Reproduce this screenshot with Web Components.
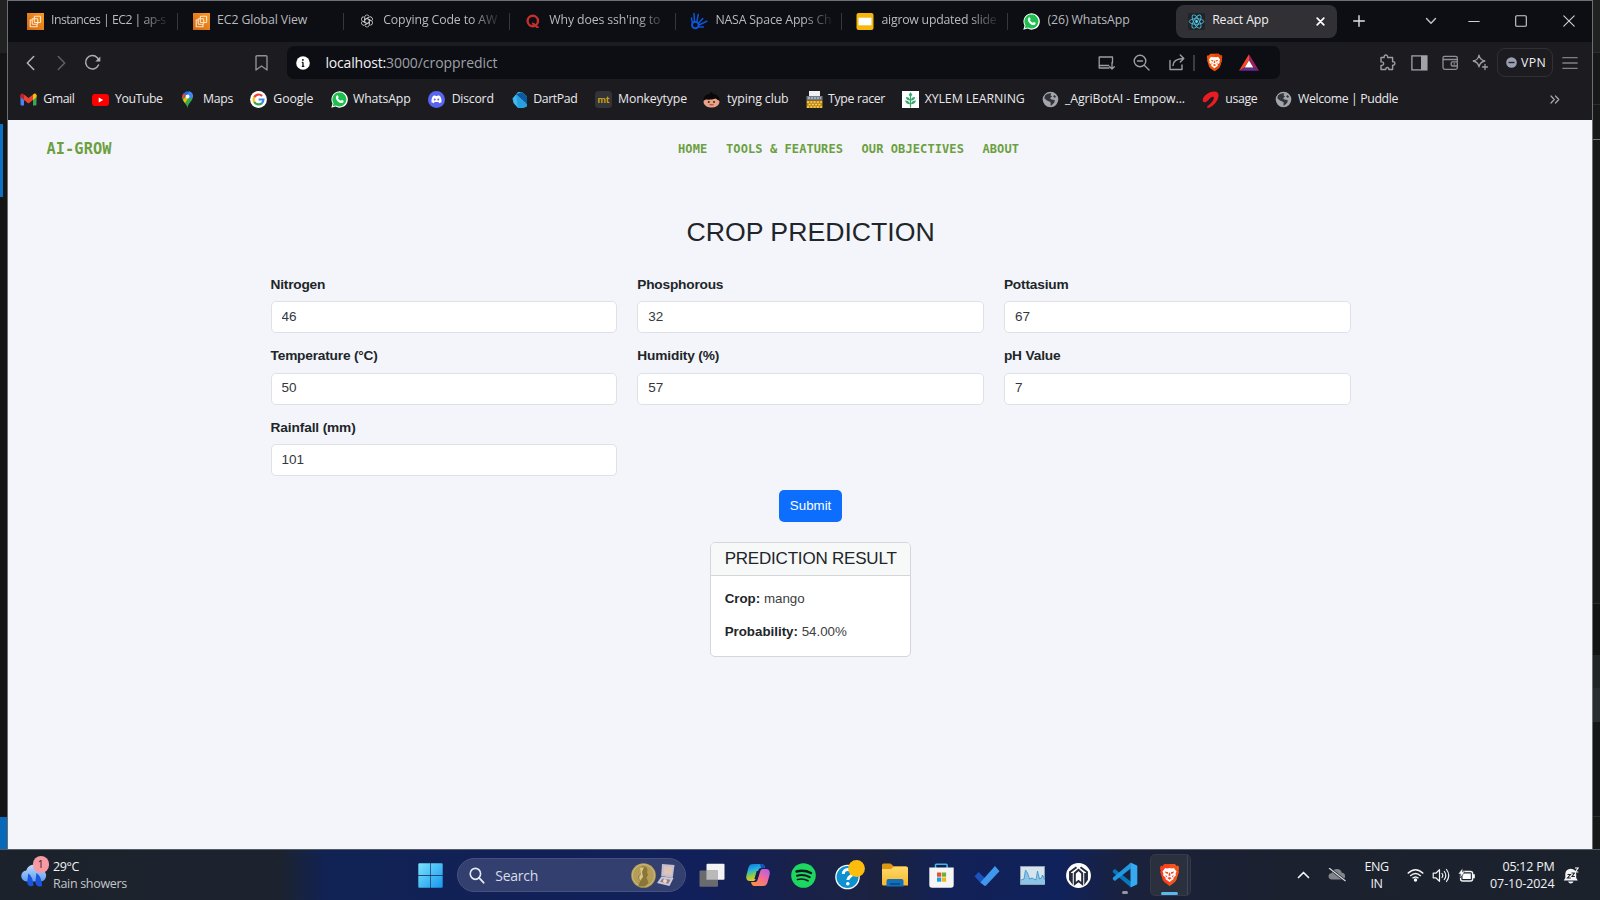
<!DOCTYPE html>
<html lang="en">
<head>
<meta charset="utf-8">
<title>React App</title>
<style>
html,body{margin:0;height:900px;overflow:hidden;background:#161717}
body{font-family:"Open Sans","Noto Sans",sans-serif}
</style>
</head>
<body>
<desktop-screen></desktop-screen>
<script>
const define = (name, render, setup) => customElements.define(name, class extends HTMLElement {
  connectedCallback() {
    if (this.shadowRoot) return;
    const root = this.attachShadow({ mode: 'open' });
    root.innerHTML = render(this);
    if (setup) setup(this, root);
  }
});

/* text whose tracking is adjusted so that it fills the width in "w" */
define('fit-text', () => `<style>:host{display:block;flex:none;white-space:nowrap;width:max-content}</style><slot></slot>`, el => {
  const w = parseFloat(el.getAttribute('w'));
  if (!w) return;
  const natural = el.getBoundingClientRect().width;
  const n = el.textContent.length;
  el.style.letterSpacing = ((w - natural) / n).toFixed(3) + 'px';
});

const shield = (a, b) => `<path fill="${a}" d="M6 1h12l2 2.5 2-.3 1 3-1 2 .6 1.800-3 9.500-1.600 2L12 26l-6-4.500-1.600-2-3-9.500L2 8.200 1 6.200l1-3 2 .3z"/><path fill="${b}" d="M12 1h6l2 2.500 2-.3 1 3-1 2 .6 1.800-3 9.500-1.600 2L12 26z"/><path fill="#fff" d="M7 5.500l2.500.6L12 5.600l2.500.5 2.500-.6 3 4-1 2 .2 2.600-3 2.400.5 1.500L12 21.500 7.300 18l.5-1.500-3-2.400.2-2.600-1-2z"/><path fill="${a}" d="M6.500 9.500l4 .8-.6 2.200-2-1zM17.500 9.500l-4 .8.6 2.200 2-1zM9.500 17l2.500-1.300 2.500 1.300-2.500 1.800zM11.300 11h1.400l.5 3-1.200.7-1.200-.7zM7 13.300l2.400 1.700-1 1zM17 13.300L14.600 15l1 1z"/>`;
const ec2 = `<defs><linearGradient id="e" x1="0" y1="1" x2="1" y2="0"><stop stop-color="#d06612"/><stop offset="1" stop-color="#fb9a25"/></linearGradient></defs><rect width="17" height="17" fill="url(#e)"/><g fill="none" stroke="#ffe6c8" stroke-width="1.100" stroke-linejoin="round"><rect x="7.300" y="3.200" width="6.300" height="6.300" rx=".8"/><path d="M5.300 7H3.200v6.700H10v-2.200"/><rect x="5.200" y="5.800" width="5.500" height="5.500" rx=".8"/></g>`;
const wa = `<path fill="#fff" d="M.3 16.800l1.200-4.300A8.200 8.200 0 1 1 4.600 15.600z"/><path fill="#1fbf4f" d="M1.800 15.300l.8-3A7 7 0 1 1 5 14.500z"/><path fill="#fff" d="M6 4.300c.5-.2.900 0 1 .4l.6 1.400c0 .4-.7.900-.6 1.200.6 1.200 1.500 2 2.700 2.500.4 0 .8-1 1.200-.9l1.600.8c.3.3 0 1.300-.4 1.700-1.500 1.300-3.700.3-5.200-1C5.300 8.800 3.800 6.500 6 4.300z"/>`;
const globe = `<circle cx="8.500" cy="8.500" r="7.800" fill="#a2a6ac"/><path fill="#33353a" d="M3 4.500C5 2.500 8 2 9.300 2.500L8.500 4.200 10 5.600 8 7.200l1.500 1.200 3.200.6-.3 2.600-3.600 3.500c-.6-1.500.4-3-.5-4L5 9.500 2.300 7.200zM12.500 4l1.800 2-2 .8-1.200-1.500z"/>`;
const line = (d, c = '#a9abb0', w = 1.3, extra = '') => `<path fill="none" stroke="${c}" stroke-width="${w}" stroke-linejoin="round" stroke-linecap="round" d="${d}"/>${extra}`;

const ICONS = {
  ec2: [17, 17, ec2],
  gpt: [14, 14, `<circle cx="7" cy="7" r="6.500" fill="#08090b"/><g fill="none" stroke="#c2c3c6" stroke-width=".9">${[0,60,120,180,240,300].map(a => `<path transform="rotate(${a} 7 7)" d="M4.600 8.300V3.400a2.400 2.400 0 0 1 4.400-1.300M4.600 5.900L8.900 3.400"/>`).join('')}</g>`],
  quora: [14, 15, `<circle cx="6.800" cy="7" r="5.200" fill="none" stroke="#c3302c" stroke-width="2.400"/><path d="M6 9.500c2.500-.3 3.500 2 4.500 3.300.6.600 1.500.4 2-.3" fill="none" stroke="#c3302c" stroke-width="1.900"/>`],
  nasa: [18, 18, `<g fill="none" stroke="#0b55d9" stroke-linecap="round"><circle cx="5.300" cy="13" r="3.300" stroke-width="1.900"/><path stroke-width="1.500" d="M2.500 11.500L1.500 6M4.500 10L4 1.500M6.800 10L8.300 2.500M8.300 11.500l4.500-5M9 13l7.800-3.700M8.500 15l5 0"/></g>`],
  slides: [18, 17, `<rect x=".5" width="17" height="17" rx="2" fill="#f4b70a"/><rect x="2.500" y="4.700" width="13" height="7.600" fill="#fff"/>`],
  wa: [17, 17, wa],
  react: [17, 17, `<rect width="17" height="17" rx="2" fill="#202329"/><g fill="none" stroke="#4fc0da" stroke-width=".9"><ellipse cx="8.500" cy="8.500" rx="7.300" ry="2.800"/><ellipse cx="8.500" cy="8.500" rx="7.300" ry="2.800" transform="rotate(60 8.500 8.500)"/><ellipse cx="8.500" cy="8.500" rx="7.300" ry="2.800" transform="rotate(120 8.500 8.500)"/></g><circle cx="8.500" cy="8.500" r="1.400" fill="#61dafb"/>`],
  x: [9, 9, line('M1.200 1.200l6.600 6.600M7.800 1.200L1.200 7.800', '#fff', 1.7)],
  plus: [12, 12, line('M6 .7v10.600M.7 6h10.600', '#e2e2e4', 1.4)],
  down: [12, 8, line('M1.500 1.500L6 6.300l4.500-4.800', '#c4c5c8', 1.4)],
  min: [12, 12, line('M.8 6.500h10.400', '#d0d1d3', 1.1)],
  max: [12, 12, '<rect x=".7" y=".7" width="10.600" height="10.600" rx="1" fill="none" stroke="#d0d1d3" stroke-width="1.100"/>'],
  close: [12, 12, line('M.8.8l10.400 10.400M11.200.8L.8 11.200', '#d0d1d3', 1.1)],
  back: [9, 16, line('M7.700 1.500L1.300 8l6.400 6.500', '#b4b5b9', 1.5)],
  fwd: [9, 16, line('M1.300 1.500L7.700 8l-6.400 6.500', '#606167', 1.5)],
  reload: [17, 17, line('M14.500 11a6.700 6.700 0 1 1-1.200-7.300L15 6', '#aeb0b4', 1.5, '<path fill="#aeb0b4" d="M16.300 2.500v5h-5z"/>')],
  mark: [13, 16, line('M1 1.800q0-1 1-1h9q1 0 1 1V15l-5.500-4L1 15z', '#8e9095', 1.4)],
  info: [14, 14, `<circle cx="7" cy="7" r="6.800" fill="#fff"/><path d="M7 6.200v4.200M5.800 6.300H7M5.800 10.400h2.500" stroke="#111218" stroke-width="1.300"/><circle cx="6.900" cy="3.900" r=".95" fill="#111218"/>`],
  install: [18, 15, line('M12 13H2.200V2h13.300v6M2.200 10.500h9.500M15 7.500V14M12.700 11.800l2.300 2.300 2.300-2.300', '#9c9da3', 1.3)],
  zoomout: [17, 17, line('M11.500 11.500L16 16M4.500 7h5', '#9c9da3', 1.4, '<circle cx="7" cy="7" r="5.800" fill="none" stroke="#9c9da3" stroke-width="1.400"/>')],
  share: [17, 17, line('M2 6.500V15.500h12V11M5 11.500c0-4 3-6.700 10.500-7M12.300 1l3.500 3.500L12.300 8', '#9c9da3', 1.4)],
  bar: [2, 18, '<path d="M1 1v16" stroke="#5c5d63" stroke-width="1.200"/>'],
  brave: [24, 27, shield('#f4560c', '#e24808')],
  brave2: [24, 27, shield('#fb3f1c', '#f2541b')],
  bat: [20, 17, `<path fill="#ff4724" d="M10 .3L0 16.700l5.500-3.200L10 6z"/><path fill="#9e1f63" d="M10 .3l10 16.400-5.500-3.200L10 6z"/><path fill="#662d91" d="M0 16.700h20l-5.500-3.200h-9z"/><path fill="#fff" d="M10 6.300L5.700 13.400h8.600z"/>`],
  puzzle: [17, 17, line('M2 3.500h3.200c-.8-3.300 4-3.300 3.400 0h5v4.300c3-.8 3 4 0 3.300V15.500H9.800c.5-2.700-3.500-2.700-3 0H2v-4c3.500.5 3.500-4.300 0-3.600z', '#9c9da3', 1.4)],
  side: [17, 16, '<rect x=".9" y=".9" width="15" height="14" fill="none" stroke="#a2a3a9" stroke-width="1.300"/><path fill="#a2a3a9" d="M10 1h6v14h-6z"/>'],
  wallet: [17, 16, line('M15.300 4.500V3q0-1.700-1.700-1.700H2.600Q1 1.300 1 3v9.500q0 1.800 1.800 1.800h11q1.500 0 1.500-1.500V4.500H1.500M15.300 6.800h-4.800q-1.300 0-1.300 1.300v1.600q0 1.300 1.300 1.300h4.800M12 8.900h.6', '#8e9095', 1.3)],
  spark: [17, 17, line('M7 1.200c.8 3.700 2 5 5.800 5.800C9 7.800 7.800 9.200 7 12.800 6.200 9.200 5 7.800 1.200 7 5 6.200 6.200 5 7 1.200zM13 10.500v5M10.500 13h5', '#9c9da3', 1.3)],
  vpn: [11, 11, '<circle cx="5.500" cy="5.500" r="5.300" fill="#9a9fb5"/><path d="M2.500 5.500h6" stroke="#22232a" stroke-width="1.400"/>'],
  menu: [16, 14, line('M.8 1.700h14.400M.8 7h14.400M.8 12.300h14.400', '#7f8086', 1.3)],
  more: [10, 9, line('M1 1l3.300 3.500L1 8M5.500 1l3.300 3.500L5.500 8', '#a9abb0', 1.2)],
  gmail: [17, 13, '<path fill="#4285f4" d="M.5 2v9.500q0 1 1 1H4V5z"/><path fill="#34a853" d="M16.500 2v9.500q0 1-1 1H13V5z"/><path fill="#fbbc04" d="M13 1.500l1.500-1q2-.3 2 1.700v2L13 7z"/><path fill="#c5221f" d="M4 1.500L2.500.5Q.5.200.5 2.200v2L4 7z"/><path fill="#ea4335" d="M4 1.400l4.500 3.500L13 1.400V7l-4.500 3.400L4 7z"/>'],
  yt: [17, 12, '<rect width="17" height="12" rx="3" fill="#f00"/><path fill="#fff" d="M6.700 3.500v5l4.500-2.500z"/>'],
  maps: [17, 17, '<path fill="#34a853" d="M8.500 17C8 13 3 10.500 3 6l11-1c0 5-5 7-5.500 12z"/><path fill="#1a73e8" d="M4 3l3-2.600 3.500 0L6 5.500z"/><path fill="#ea4335" d="M3.300 7.500A5.500 5.500 0 0 1 4.200 2.500L7 4.700z"/><path fill="#fbbc04" d="M4 9l6.500-7 2 0-6.500 10z"/><path fill="#4285f4" d="M10 .3c3 .8 4.500 3 4 5.700L11 7.800 8 4z"/><circle cx="8.500" cy="5.600" r="2" fill="#f4f6fb"/>'],
  google: [17, 17, '<circle cx="8.500" cy="8.500" r="8.400" fill="#fff"/><g fill="none" stroke-width="2.200"><path stroke="#ea4335" d="M4.300 6.200a4.900 4.900 0 0 1 7.800-1.300"/><path stroke="#fbbc05" d="M4.500 11.200a5 5 0 0 1-.1-5.200"/><path stroke="#34a853" d="M12 12.100a4.900 4.900 0 0 1-7.700-1.200"/><path stroke="#4285f4" d="M8.600 8.500h4.800a5 5 0 0 1-1.600 3.700"/></g>'],
  discord: [17, 17, '<circle cx="8.500" cy="8.500" r="8.500" fill="#5865f2"/><path fill="#fff" d="M5 5l2-.7.600.8h1.800l.6-.8 2 .7c1.300 2 1.700 4 1.500 6.200l-2.300 1-.8-1.300H6.600l-.8 1.300-2.300-1C3.300 9 3.700 7 5 5z"/><circle cx="6.700" cy="8.600" r="1" fill="#5865f2"/><circle cx="10.300" cy="8.600" r="1" fill="#5865f2"/>'],
  dart: [17, 17, '<path fill="#40b8ee" d="M1.500 7.500L7 1h4l5 4.500-1 7-5 4.500H7L2.500 12z"/><path fill="#0a5a9c" d="M5 3.300L11 1l5 4.500v7.800z"/><path fill="#2a9fe0" d="M5 3.300l11 10v2.200L12.500 17H7z"/>'],
  mt: [17, 17, '<rect width="17" height="17" rx="3.500" fill="#323437"/><text x="8.500" y="12" text-anchor="middle" font-family="Lato" font-weight="700" font-size="10" fill="#d5a914">mt</text>'],
  tc: [17, 17, '<ellipse cx="8.500" cy="11" rx="8" ry="5.500" fill="#eaa287"/><path fill="#0b0908" d="M.5 9.800C.3 5 4 3 7 2.700 6.500.300 10 .300 9.800 2.700c4 .3 7 2.800 6.700 7.100-2-.6-2.500-1.700-4-2.300C9.500 8.800 5 8.800 2.700 8.500z"/><circle cx="5.800" cy="11" r=".9" fill="#221610"/><circle cx="11" cy="11" r=".9" fill="#221610"/><path stroke="#8e4032" d="M6.500 13.800h4"/>'],
  racer: [17, 17, '<path fill="#f1f1f3" d="M3 0h11v6H3z"/><path fill="#777c88" d="M.5 5h16v4.500H.5z"/><path stroke="#ddd" stroke-dasharray="2 1" d="M2 7h13"/><path fill="#bd8717" d="M.5 9.500h16V17H.5z"/><path stroke="#ffd65a" stroke-width="1.700" stroke-dasharray="2 1.300" d="M1 11h15M2.500 13.500h13M1 16h15"/>'],
  xylem: [17, 17, '<path fill="#fff" d="M0 0h17v17H0z"/><g fill="#35a86b"><path d="M8.500 1.200l1.800 2.500-1.800 2.500-1.800-2.500zM7.900 5h1.200v11.500H7.900zM8 9.500C5 9.500 4.200 8 4 6c2.500 0 3.800 1 4 3.500zM9 9.500c3 0 3.800-1.500 4-3.500-2.500 0-3.800 1-4 3.500zM8 13.300c-3 0-4.500-1.800-5-3.800 3 0 4.800 1.300 5 3.800zM9 13.300c3 0 4.500-1.800 5-3.800-3 0-4.800 1.300-5 3.800z"/></g>'],
  globe: [17, 17, globe],
  airtel: [17, 17, '<path fill="#e91c24" d="M.7 9.500C.5 5.500 6.500.5 12 .5c3.500 0 4.800 1.800 4.500 4.500-.5 5-4.500 9.500-9.300 11.700-2 .6-2.700-.6-1.700-1.700 2.500-1.700 5.500-4.300 6.300-7.500.4-1.800-.8-2.300-2.600-1.300C7.500 7.200 6.500 9.500 4 11c-1.800.8-3.200.2-3.300-1.500z"/>'],
  weather: [27, 23, '<defs><linearGradient id="c" x2="0" y2="1"><stop stop-color="#c0dafa"/><stop offset="1" stop-color="#5d9df2"/></linearGradient></defs><path fill="url(#c)" d="M6 17.500a5.500 5.500 0 0 1-.5-11C7.500-.5 18-1.500 20 6c4.500.5 6.700 3 6 6.500-.5 3-2.500 4.800-5.500 5z"/><path fill="#1b55dd" d="M7.500 9.500c3 2 5 5.500 5.500 12-3 2-7 0-6.500-4zM16 9c3.500 2.500 5.500 6 6 13-4 1.300-7.500-.5-7-4.500z"/>'],
  win: [25, 25, '<defs><linearGradient id="w" x2="1" y2="1"><stop stop-color="#7ae4fb"/><stop offset="1" stop-color="#1696ee"/></linearGradient></defs><path fill="url(#w)" d="M1 .3h11.200v11.900H.3V1zM12.800.3H24l.7.700v11.200H12.800zM.3 12.900h11.900v11.800H1l-.7-.7zM12.800 12.900h11.900V24l-.7.700H12.800z"/>'],
  search: [17, 17, line('M10.800 10.800L15.500 15.700', '#e8eaf2', 1.9, '<circle cx="6.800" cy="6.800" r="5.500" fill="none" stroke="#e8eaf2" stroke-width="1.700"/>')],
  medal: [45, 25, '<circle cx="12.500" cy="12.500" r="12.300" fill="#b39d58"/><circle cx="12.500" cy="12.500" r="11" fill="none" stroke="#d7c683" stroke-width=".7"/><path fill="#8a7637" d="M10.500 3.500c5-1.300 7 3 5.500 5.500l1 3-1.500 2.500 2 5.500-3.500 3.500H7l2-5-2-4.500 3-3.500z"/><path fill="#d8c688" d="M9 5l4-1-2 5 1 5-3 4-1-4 2-3z"/><path fill="#c5bdd0" d="M31 1l12.500 1-1.800 13-11.500-2z"/><path fill="#dec3b7" d="M33 3.500l8.500.8-1 8-8-1.300z"/><path fill="#cdc9dd" d="M30.500 13.500l12 1.500-4 8-12.500-3z"/><path fill="#927f83" d="M31.500 15.500l8 1.300-2.500 4-8-2z"/><circle cx="34" cy="18" r="2" fill="#eed9c3"/>'],
  task: [26, 25, '<rect x="7.500" y=".7" width="18" height="16" rx="1" fill="#f3f3f3"/><rect x=".5" y="7.500" width="18.500" height="16.300" rx="1" fill="#707070" opacity=".94"/><path fill="#b9b9b9" d="M7.500 7.500H19v9.200H7.500z"/>'],
  copilot: [24, 24, '<defs><linearGradient id="p" x2=".3" y2="1"><stop stop-color="#0b73dc"/><stop offset=".4" stop-color="#25b2de"/><stop offset=".7" stop-color="#87cb47"/><stop offset="1" stop-color="#f6c422"/></linearGradient><linearGradient id="q" x1="1" x2=".3" y2="1"><stop stop-color="#a85ef5"/><stop offset=".5" stop-color="#f06a9c"/><stop offset="1" stop-color="#fd8d45"/></linearGradient></defs><path fill="url(#p)" d="M7 1h9c2 .3 2.500 1.700 3 4h-3.500c-2 0-2.800.8-3.300 2.500L10 15c-.8 2.500-1.500 3-3.500 3H4C.5 18-.3 15.500.5 12l2-7.500C3.300 2 4.500 1 7 1z"/><path fill="url(#q)" d="M17 23H8.500c-2 0-3-1.300-3.500-4h3.300c2 0 2.900-1 3.400-2.600L14 9c.8-2.500 1.500-3 3.500-3H20c3.500 0 4.300 2.500 3.500 6l-2 7.500C20.700 22 19.500 23 17 23z"/><path fill="#1552bd" d="M14 1h2c2 .3 2.500 1.700 3 4h-4z"/><path fill="#131d50" d="M10.700 8h3l-2.300 8h-3z"/>'],
  spotify: [25, 25, '<circle cx="12.500" cy="12.500" r="12.300" fill="#1ed760"/><g fill="none" stroke="#0b1a20" stroke-linecap="round"><path stroke-width="2.500" d="M5.500 8.500c5-1.500 10-.8 14.500 1.500"/><path stroke-width="2.100" d="M6 12.700c4.500-1.300 8.700-.700 12.700 1.400"/><path stroke-width="1.700" d="M6.500 16.500c4-1 7.500-.5 10.500 1.300"/></g>'],
  help: [30, 30, '<circle cx="12.500" cy="17" r="12.300" fill="#fff"/><circle cx="12.500" cy="17" r="11" fill="#0d91d1"/><path fill="none" stroke="#fff" stroke-width="3" d="M8.300 14c0-6 9-5.700 9-.6 0 3.300-4.500 3-4.500 6.600"/><circle cx="12.800" cy="23.800" r="1.800" fill="#fff"/><circle cx="21.500" cy="8.500" r="8.400" fill="#fcbd0e"/>'],
  folder: [26, 24, '<defs><linearGradient id="f" x2="0" y2="1"><stop stop-color="#ffd968"/><stop offset="1" stop-color="#f5b82d"/></linearGradient></defs><path fill="#dc9716" d="M0 2q0-1.500 1.500-1.500h7L12 3.500h12V9H0z"/><path fill="url(#f)" d="M0 6h9l3-2.500h12.500q1.500 0 1.500 1.500v17.500H1.500Q0 22.500 0 21z"/><path fill="#1270ba" d="M4.500 23.500V18q0-2 2-2h13q2 0 2 2v5.500z"/><path fill="#0b508e" d="M8 20h10v2H8z"/>'],
  store: [25, 25, '<path fill="none" stroke="#44b6e5" stroke-width="1.600" d="M6.500 5V2q0-.8.800-.8h10q.8 0 .8.800v3"/><path fill="#f5f5f5" d="M.3 4.500h24.400V22q0 2.700-2.700 2.700H3Q.3 24.700.3 22z"/><path fill="#e85028" d="M8 9.500h4.200v4.200H8z"/><path fill="#6fb12d" d="M12.900 9.500h4.200v4.200h-4.200z"/><path fill="#1d9be3" d="M8 14.500h4.200v4.200H8z"/><path fill="#f7b514" d="M12.900 14.500h4.200v4.200h-4.200z"/>'],
  todo: [26, 21, '<path fill="#1c52bd" d="M.5 11.300L4.700 7l6 6-4.500 4.500z"/><path fill="#3f98ee" d="M6.200 17.500l4.300 3.200q.8.500 1.500-.3L25.500 6.300 21 1 10.500 12.700z"/>'],
  mon: [25, 19, '<path fill="#d5e4ed" stroke="#96a6b0" stroke-width=".8" d="M.4.400h24.200v18.200H.4z"/><path fill="#8cc4e6" d="M1 14l3-1 1-7.500 2.500 1 1.500 6 3-1 1 1 3.500 1 1-8 1 3 1 4 2-1 1-3 2.500 5v4.500H1z"/><path fill="none" stroke="#3a8fc4" stroke-width=".8" d="M1 14l3-1 1.500-9 2 3 2 6 3-1 1 1 2.500 1 1.500-9 1 4 1 4 2-1 1-3 2.500 5"/>'],
  dome: [25, 25, '<circle cx="12.500" cy="12.500" r="12.400" fill="#fff"/><g fill="none" stroke="#252b3c"><path stroke-width="2" d="M8.800 21V10.300l3.700-3.500 3.700 3.500V21l-3.700-3z"/><path stroke-width="1.900" d="M10.500 4.300L4 9v7.500l1.800 2.500V10M14.500 4.300L21 9v7.500L19.200 19V10"/></g>'],
  code: [26, 26, '<path fill="#0878be" d="M.8 8.800l2-1.800 16 12.500V25l-1-.5L.8 10.200z"/><path fill="#2198e2" d="M.8 17.200l2 1.800 16-12.500V1l-1 .5L.8 15.800z"/><path fill="#35aaf3" d="M18.500.5l6 2.800q.8.400.8 1.200v17q0 .8-.8 1.200l-6 2.800z"/>'],
  up: [13, 8, line('M1.500 6.500l5-5 5 5', '#f2f3f5', 1.7)],
  cloud: [18, 14, '<path fill="#82868c" d="M4 11.500q-3.500-.3-3.500-3.300Q.700 5.500 3.500 5.300 5 1 9 1q4 .2 4.800 3.700 3.300.3 3.300 3.500 0 3-3.200 3.300z"/><path stroke="#1c222c" stroke-width="2.600" d="M1 0l16.500 13"/><path stroke="#dadce0" stroke-width="1.200" d="M1 0l16.500 13"/>'],
  wifi: [17, 14, '<g fill="none" stroke="#f2f3f5" stroke-width="1.400"><path d="M.7 5.500q7.800-7.500 15.600 0"/><path d="M3.200 8q5.300-5 10.600 0"/><path d="M5.500 10.300q3-2.700 6 0"/></g><circle cx="8.500" cy="12" r="1.700" fill="#fff"/>'],
  vol: [18, 15, line('M1.200 5.200h2.600l3.700-3.500v11.600L3.800 9.800H1.200zM10 5.500q1.600 2 0 4M12.300 3.500q3 4 0 8M14.500 1.500q4.500 6 0 12', '#f2f3f5', 1.2)],
  batt: [17, 15, '<rect x="2.600" y="3.500" width="12" height="9.500" rx="2" fill="none" stroke="#f2f3f5" stroke-width="1.400"/><path fill="#fff" d="M4.500 5.600h8.300V11H4.500zM15 6.300h1.800v4H15z"/><path fill="#fff" stroke="#1c222c" stroke-width=".6" d="M4.800 0L0 6h2.800L2 10l5-6H4.500z"/>'],
  bell: [16, 17, '<path fill="#f4f4f6" d="M.7 13.500L2.300 11V7q.3-5 5.400-5.200Q13 2 13.200 7v4l1.600 2.500zM5 14.500h5.500q-.6 2-2.700 2T5 14.500z"/><path fill="none" stroke="#1c222c" stroke-width="1.100" d="M4.500 7.500h3l-3 3.500h3.300M8.500 6h3L9 9.500h2.800"/><path fill="none" stroke="#fff" stroke-width="1.100" d="M12 1h3.200L12.300 5h3"/>']
};

/* <ui-icon name="…" w h>: one drawing from the set, optionally scaled */
define('ui-icon', el => {
  const [w, h, body] = ICONS[el.getAttribute('name')];
  const W = el.getAttribute('w') || w, H = el.getAttribute('h') || h;
  return `<style>:host{display:block;flex:none;width:${W}px;height:${H}px}svg{display:block}</style>
  <svg width="${W}" height="${H}" viewBox="0 0 ${w} ${h}" preserveAspectRatio="none">${body}</svg>`;
});

/* a slot of fixed width in a bar; its content is centred on both axes */
define('bar-cell', el => `<style>:host{display:flex;flex:none;align-items:center;justify-content:center;width:${el.getAttribute('w')}px}</style><slot></slot>`);
const cell = (w, icon, size = '') => `<bar-cell w="${w}">${icon ? `<ui-icon name="${icon}" ${size}></ui-icon>` : ''}</bar-cell>`;

define('browser-tab', el => `<style>
:host{display:flex;flex:none;box-sizing:border-box;width:166.1px;height:33px;align-items:center;padding-left:14px;color:#b9babd;font-size:12.300px;line-height:18px;border-right:0}
.ico{width:18px;display:flex;justify-content:center;flex:none;margin-right:7px}
.label{width:116px;overflow:hidden;flex:none;padding-bottom:1.500px}
:host([fade]) .label{-webkit-mask-image:linear-gradient(90deg,#000 76%,rgba(0,0,0,.12));mask-image:linear-gradient(90deg,#000 76%,rgba(0,0,0,.12))}
.sep{width:1px;height:17px;background:#36373c;margin-left:9.500px}
:host([active]){width:161px;background:#313035;border-radius:8px;color:#f0f0f1;padding-left:11.500px}
:host([active]) .label{width:104px}
:host([active]) .sep,:host([last]) .sep{display:none}
</style><span class="ico"><ui-icon name="${el.getAttribute('icon')}"></ui-icon></span>
<span class="label"><fit-text w="${el.getAttribute('tw')}">${el.getAttribute('label')}</fit-text></span>
${el.hasAttribute('active') ? '<ui-icon name="x"></ui-icon>' : '<span class="sep"></span>'}`);

const TABS = [
  ['ec2', 'Instances | EC2 | ap-s', 114.5, 'fade'],
  ['ec2', 'EC2 Global View', 90, ''],
  ['gpt', 'Copying Code to AW', 114, 'fade'],
  ['quora', "Why does ssh'ing to", 111, 'fade'],
  ['nasa', 'NASA Space Apps Ch', 116, 'fade'],
  ['slides', 'aigrow updated slide', 115, 'fade'],
  ['wa', '(26) WhatsApp', 82, 'last']
];
define('tab-strip', () => `<style>
:host{display:flex;height:41px;align-items:flex-start;padding:3.500px 0 0 4px;box-sizing:border-box;background:#0d0e13}
browser-tab[active]{margin-left:1px}
.end{display:flex;height:33px}
</style>${TABS.map(([i, l, w, f]) => `<browser-tab icon="${i}" label="${l}" tw="${w}" ${f}></browser-tab>`).join('')}<browser-tab active icon="react" label="React App" tw="56.500"></browser-tab>
<div class="end">${cell(44, 'plus')}${cell(101, 'down')}</div><div class="end" style="margin-left:-34.500px">${cell(53, 'min')}${cell(42, 'max')}${cell(54, 'close')}</div>`);

define('address-bar', () => `<style>
:host{display:flex;flex:none;align-items:center;width:993px;height:33px;border-radius:7px;background:#0d0e13;font-size:14px;line-height:20px;color:#9fa1a6;box-sizing:border-box;padding-left:9.500px}
.host{color:#f2f2f3;margin-left:15.500px}.fill{flex:1}
</style><ui-icon name="info"></ui-icon><fit-text class="host" w="60.500">localhost:</fit-text><fit-text w="111.500">3000/croppredict</fit-text><span class="fill"></span>
${cell(33, 'install')}${cell(38, 'zoomout')}${cell(32, 'share')}${cell(2, 'bar')}${cell(40, 'brave', 'w="17" h="19"')}${cell(29, 'bat')}<bar-cell w="16"></bar-cell>`);

define('tool-bar', () => `<style>
:host{display:flex;height:41px;align-items:center;background:#1c1b20;box-sizing:border-box;padding:0 0 0 7px}
.vpn{display:flex;align-items:center;gap:4px;box-sizing:border-box;width:56px;height:29px;border:1px solid #303035;border-radius:8px;padding-left:8px;color:#f0f0f1;font-size:12.300px;margin-left:1px}
</style>${cell(31, 'back')}${cell(31, 'fwd')}${cell(31, 'reload')}${cell(138)}${cell(31, 'mark')}${cell(8.5)}<bar-cell w="1"></bar-cell><address-bar></address-bar>
<bar-cell w="92.500"></bar-cell>${cell(31.5, 'puzzle')}${cell(31, 'side')}${cell(31, 'wallet')}${cell(30.5, 'spark')}<div class="vpn"><ui-icon name="vpn"></ui-icon><fit-text w="25">VPN</fit-text></div>${cell(34, 'menu')}`);

const MARKS = [
  ['gmail', 'Gmail', 20, 43.3, 31], ['yt', 'YouTube', 91.5, 115, 47.5], ['maps', 'Maps', 179, 203, 30],
  ['google', 'Google', 250, 273.3, 40], ['wa', 'WhatsApp', 331, 353, 57.5], ['discord', 'Discord', 428, 451.7, 42],
  ['dart', 'DartPad', 511, 533.3, 44], ['mt', 'Monkeytype', 595, 618, 69], ['tc', 'typing club', 703, 727, 61.5],
  ['racer', 'Type racer', 805.5, 828, 57], ['xylem', 'XYLEM LEARNING', 902, 924.7, 100],
  ['globe', '_AgriBotAI - Empow...', 1041.5, 1065, 120], ['airtel', 'usage', 1202.3, 1225.3, 32], ['globe', 'Welcome | Puddle', 1275, 1298, 100]
];
define('bookmark-item', el => `<style>:host{display:flex;flex:none;align-items:center}.i{display:flex;flex:none;width:17px;justify-content:center}</style><span class="i"><ui-icon name="${el.getAttribute('icon')}"></ui-icon></span><slot></slot>`);
define('bookmark-bar', () => `<style>
:host{display:flex;height:37px;box-sizing:border-box;align-items:center;background:#1c1b20;padding:0 0 4px 12px;color:#e9e9eb;font-size:12.300px;line-height:18px}
fit-text{padding-bottom:1px}
</style>${MARKS.map(([i, l, x, t, w], k) => `<bookmark-item icon="${i}" style="width:${(k < 13 ? MARKS[k + 1][2] : 1550.5) - x}px"><fit-text w="${w}" style="margin-left:${t - x - 17}px">${l}</fit-text></bookmark-item>`).join('')}<ui-icon name="more"></ui-icon>`);

define('site-nav', () => `<style>
:host{display:flex;align-items:center;height:56px;padding:1px 0 0 38.500px;box-sizing:border-box;color:#6c9f40;font-family:"DejaVu Sans Mono","Liberation Mono",monospace;font-weight:700;font-size:12px;line-height:20px}
.brand{font-size:15.300px;width:631.500px}
nav{display:flex;gap:18.500px}
</style><div class="brand"><fit-text w="65">AI-GROW</fit-text></div><nav><fit-text w="29.500">HOME</fit-text><fit-text w="117">TOOLS &amp; FEATURES</fit-text><fit-text w="102.500">OUR OBJECTIVES</fit-text><fit-text w="36.500">ABOUT</fit-text></nav>`);

define('form-field', el => `<style>
:host{display:block}
label{display:block;font-weight:700;font-size:13.700px;line-height:20px;margin-bottom:6.670px;width:max-content}
input{display:block;width:100%;box-sizing:border-box;height:31.670px;border:1px solid #dee2e6;border-radius:5px;background:#fff;color:#33383d;font:inherit;font-size:13.500px;line-height:20px;padding:4px 10px 6px;margin:0;outline:0}
</style><label><fit-text w="${el.getAttribute('lw')}">${el.getAttribute('label')}</fit-text></label><input value="${el.getAttribute('value')}">`);

define('result-card', () => `<style>
:host{display:block;box-sizing:border-box;width:200.500px;border:1px solid #d4d6d9;border-radius:5px;background:#fff;overflow:hidden}
h5{margin:0;font-weight:400;font-size:17px;line-height:20px;padding:6.200px 13.300px 6.800px;background:#f7f8f8;border-bottom:1px solid #d4d6d9}
.body{padding:12.700px 13.300px 13.300px}p{margin:0 0 13.300px;line-height:20px;color:#3c4045}p:last-child{margin:0}b{color:#212529}
</style><h5><fit-text w="172">PREDICTION RESULT</fit-text></h5><div class="body"><p><b>Crop:</b> mango</p><p><b>Probability:</b> 54.00%</p></div>`);

define('crop-page', () => `<style>
:host{display:block;flex:1;background:#f3f5fa;color:#212529;font-family:"Liberation Sans",Arial,sans-serif;font-size:13.330px}
main{width:1080px;margin:0 0 0 262.600px;display:flex;flex-direction:column;align-items:center}
h2{margin:40px 0 26.600px;font-weight:400;font-size:26.670px;line-height:32px}
form{display:grid;grid-template-columns:repeat(3,1fr);column-gap:20px;row-gap:13.300px;width:100%}
button{font:inherit;line-height:20px;margin:13.700px 0 19.700px;width:62.700px;height:32px;padding:0;border:0;border-radius:5px;background:#0d6efd;color:#fff}
</style><site-nav></site-nav><main><h2>CROP PREDICTION</h2><form>
<form-field label="Nitrogen" lw="54.500" value="46"></form-field><form-field label="Phosphorous" lw="86" value="32"></form-field><form-field label="Pottasium" lw="64.500" value="67"></form-field>
<form-field label="Temperature (°C)" lw="107" value="50"></form-field><form-field label="Humidity (%)" lw="82" value="57"></form-field><form-field label="pH Value" lw="56.500" value="7"></form-field>
<form-field label="Rainfall (mm)" lw="85" value="101"></form-field></form><button type="button">Submit</button><result-card></result-card></main>`);

define('browser-window', () => `<style>
:host{display:flex;flex-direction:column;box-sizing:border-box;width:1586px;height:849px;border:1px solid #6c7070;border-bottom:0;background:#f3f5fa}
</style><tab-strip></tab-strip><tool-bar></tool-bar><bookmark-bar></bookmark-bar><crop-page></crop-page>`);

/* slivers of the window that lies behind the browser */
define('edge-left', () => `<style>:host{display:flex;flex-direction:column;width:7px;height:849px;background:#151515}i{display:block}</style><i style="height:53px;background:#222"></i><i style="height:71px"></i><i style="height:73px;width:3px;background:#0b6fc4"></i><i style="height:620px"></i><i style="height:32px;background:#0969b9"></i>`);
define('edge-right', () => `<style>:host{display:flex;flex-direction:column;width:7px;height:849px;background:#171919}i{display:block;flex:none}</style><i style="height:52px;background:#202222"></i><i style="height:1px;background:#2c2e2e"></i><i style="height:51px"></i><i style="height:1px;background:#2c2e2e"></i><i style="height:34px"></i><i style="height:1px;background:#777"></i><i style="height:463px"></i><i style="height:1px;background:#292b2c"></i><i style="height:51px;background:#121414"></i><i style="height:33px;background:#222526"></i><i style="height:34px;background:#2a2d2f"></i><i style="height:94px;background:#141617"></i><i style="height:1px;background:#2c2e2e"></i>`);

define('weather-widget', () => `<style>
:host{display:flex;align-items:flex-start;width:398px;padding-left:21px;box-sizing:border-box;color:#f1f2f4;font-size:12.500px;line-height:17px}
.pic{position:relative;width:32px;height:42px}
.pic ui-icon{margin-top:14px}
.badge{position:absolute;left:11.500px;top:6px;width:16.500px;height:16.500px;border-radius:50%;background:#f79aa4;color:#42202a;font-size:11px;line-height:16.500px;text-align:center}
.t{margin-top:8px}.g{color:#c3c6ca}
</style><div class="pic"><ui-icon name="weather" w="26"></ui-icon><span class="badge">1</span></div><div class="t"><fit-text w="26">29°C</fit-text><fit-text class="g" w="74">Rain showers</fit-text></div>`);

define('task-search', () => `<style>
:host{display:flex;flex:none;align-items:center;box-sizing:border-box;width:229px;height:34px;border:1px solid #44507e;border-radius:17px;background:#33406f;color:#d9dce8;font-size:14px;line-height:20px;padding:0 9px 0 11.500px}
fit-text{margin-left:10px;padding-top:1px}.fill{flex:1}
</style><ui-icon name="search" w="16"></ui-icon><fit-text w="43">Search</fit-text><span class="fill"></span><ui-icon name="medal"></ui-icon>`);

define('app-button', el => `<style>
:host{display:flex;flex:none;position:relative;width:45.900px;height:42px;align-items:center;justify-content:center}
:host([active]){width:41.500px;box-sizing:border-box;background:linear-gradient(90deg,#2b303f 36px,#414756 36px,#414756 37px,#262c39 37px);border:1px solid #343a48;border-radius:5px;margin-left:2px;padding-right:1px}
.run{position:absolute;bottom:2px;left:50%;width:6.500px;height:3px;margin-left:-3px;border-radius:2px;background:#9496a0}
:host([active]) .run{width:17px;margin-left:-9px;bottom:0;background:#5bb8ee}
</style><ui-icon name="${el.getAttribute('icon')}" ${el.hasAttribute('active') ? 'w="21" h="24"' : ''}></ui-icon>${el.hasAttribute('run') ? '<span class="run"></span>' : ''}`);

define('system-tray', () => `<style>
:host{display:flex;align-items:center;height:42px;color:#f1f2f4;font-size:12.500px;line-height:17px}
.c{display:flex;flex-direction:column;align-items:center;width:28px}
.r{display:flex;flex-direction:column;align-items:flex-end;width:79.500px;margin-right:8.500px}
</style>${cell(15, 'up')}<bar-cell w="16"></bar-cell>${cell(20, 'cloud')}<bar-cell w="15.500"></bar-cell><div class="c"><fit-text w="24">ENG</fit-text><fit-text w="12">IN</fit-text></div><bar-cell w="15.500"></bar-cell>${cell(19, 'wifi')}${cell(32, 'vol')}${cell(18, 'batt')}<div class="r"><fit-text w="52">05:12 PM</fit-text><fit-text w="64.500">07-10-2024</fit-text></div><ui-icon name="bell"></ui-icon>`);

const APPS = ['task', 'copilot', 'spotify', 'help', 'folder', 'store', 'todo', 'mon', 'dome'];
define('task-bar', () => `<style>
:host{display:flex;box-sizing:border-box;height:51px;border-top:1px solid #555c63;background:linear-gradient(90deg,#1c222b 0,#1c232f 280px,#112254 325px,#11205a 700px,#19214a 800px,#1b2240 880px,#122157 950px,#10225b 1060px,#1a213b 1130px,#1b212e 1290px,#1c222c 1600px)}
.mid{display:flex;align-items:center;height:42px;margin-top:4px}
task-search{margin-right:3px}.gap{flex:1}
.logo{padding-left:7px}
app-button[icon=help]{padding-left:1px;width:44.900px}
system-tray{margin:4px 21px 0 0}
</style><weather-widget></weather-widget><div class="mid"><div class="logo">${cell(51.7, 'win')}</div><task-search></task-search>${APPS.map(a => `<app-button icon="${a}"></app-button>`).join('')}<app-button icon="code" run></app-button><app-button icon="brave2" active run></app-button></div><span class="gap"></span><system-tray></system-tray>`);

define('desktop-screen', () => `<style>
:host{display:grid;grid-template:849px 51px/7px 1586px 7px;width:1600px;height:900px;overflow:hidden}
task-bar{grid-column:1/-1;min-width:0}
</style><edge-left></edge-left><browser-window></browser-window><edge-right></edge-right><task-bar></task-bar>`);
</script>
</body>
</html>
